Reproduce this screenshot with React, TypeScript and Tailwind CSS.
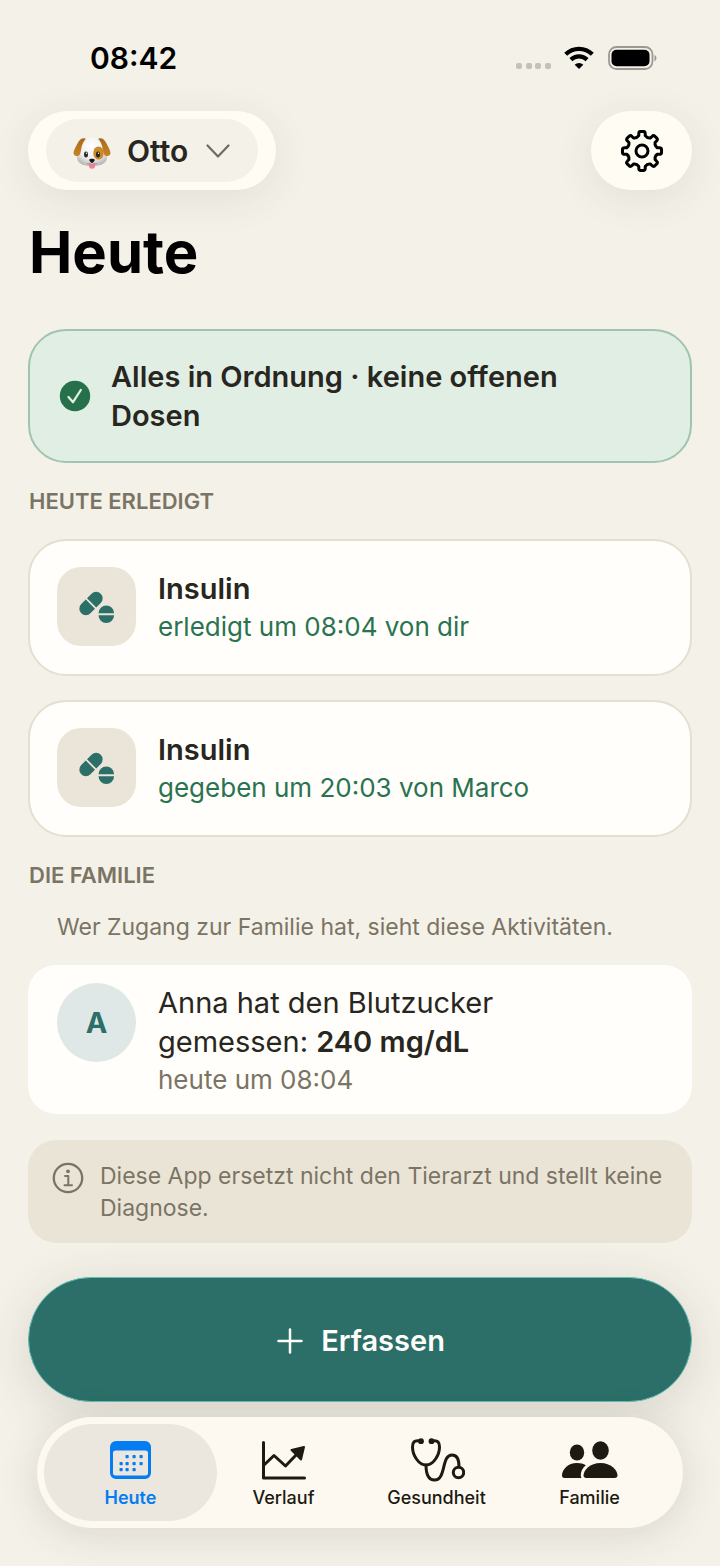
import type { ReactNode } from "react";

const gearPath = (() => {
  const point = (radius: number, degrees: number) => {
    const a = ((degrees - 90) * Math.PI) / 180;
    return `${(22 + radius * Math.cos(a)).toFixed(2)} ${(22 + radius * Math.sin(a)).toFixed(2)}`;
  };
  let d = "";
  for (let i = 0; i < 8; i++) {
    const c = i * 45;
    d += `${i === 0 ? "M" : "L"}${point(15.6, c - 12)}`;
    d += `L${point(17.6, c - 10.5)}Q${point(19.6, c - 9.5)} ${point(19.6, c - 5)}`;
    d += `L${point(19.6, c + 5)}Q${point(19.6, c + 9.5)} ${point(17.6, c + 10.5)}`;
    d += `L${point(15.6, c + 12)}Q${point(13.6, c + 22.5)} ${point(15.6, c + 33)}`;
  }
  return d + "Z";
})();

function GearIcon() {
  return (
    <svg viewBox="0 0 44 44" className="size-11" fill="none" stroke="#000" strokeWidth="3" strokeLinejoin="round" aria-hidden="true">
      <path d={gearPath} />
      <circle cx="22" cy="22" r="6" />
    </svg>
  );
}

function DogIcon() {
  return (
    <svg viewBox="0 0 38 32" className="mt-1 h-8 w-[38px]" aria-hidden="true">
      <defs>
        <radialGradient id="fur" cx="0.5" cy="0.3" r="0.7">
          <stop offset="0" stopColor="#ffffff" />
          <stop offset="0.65" stopColor="#f0efee" />
          <stop offset="1" stopColor="#b9b6b4" />
        </radialGradient>
        <linearGradient id="ear" x1="0" y1="0" x2="0" y2="1">
          <stop offset="0" stopColor="#a8681c" />
          <stop offset="1" stopColor="#c98523" />
        </linearGradient>
      </defs>
      <path d="M19 .5C26 .5 29.500 4 31 10c.800 3.500 3 6.500 3 10.500 0 6-6.500 8.500-15 8.500S4 26.500 4 20.500C4 16.500 6.200 13.500 7 10 8.500 4 12 .5 19 .5Z" fill="url(#fur)" />
      <path d="M13 1.800C9.500.300 6.800 2 4.800 6 3.200 9.500.500 13 .500 16c0 3.500 5 4.200 6.500 1.200C8.800 13 7.800 7 13 1.800Z" fill="url(#ear)" />
      <path d="M25 1.800c3.500-1.500 6.200.200 8.200 4.200 1.600 3.500 4.300 7 4.300 10 0 3.500-5 4.200-6.500 1.200C29.200 13 30.200 7 25 1.800Z" fill="url(#ear)" />
      <ellipse cx="25.500" cy="16" rx="5.200" ry="6.600" fill="#c98a2b" />
      <ellipse cx="13" cy="17.500" rx="2" ry="3" fill="#2d2b2b" />
      <ellipse cx="25" cy="17.500" rx="2" ry="3" fill="#2d2216" />
      <circle cx="13.500" cy="16.300" r=".7" fill="#fff" />
      <circle cx="25.500" cy="16.300" r=".7" fill="#fff" />
      <path d="M16 27h6v1.800a3 3 0 0 1-6 0Z" fill="#ef7f96" />
      <path d="M14 26.500c2.500.800 4.500-.200 5-1.500.500 1.300 2.500 2.300 5 1.500" fill="none" stroke="#8d8785" strokeWidth=".7" />
      <path d="M16.300 22.500c.700-1 4.700-1 5.400 0 .400.900-1.700 3.300-2.700 3.300s-3.100-2.400-2.700-3.300Z" fill="#161616" />
    </svg>
  );
}

function PillsIcon() {
  return (
    <svg viewBox="1 0 36 32" className="h-8 w-9" fill="#2c6e68" aria-hidden="true">
      <g transform="translate(13 12.500) rotate(-45)">
        <path d="M-.9-6.500v13h-6.400a6.500 6.500 0 0 1 0-13Z" />
        <path d="M.9-6.500v13h6.400a6.500 6.500 0 0 0 0-13Z" />
      </g>
      <path d="M20.500 22.200a7.800 7.800 0 0 1 15.600 0Z" />
      <path d="M20.500 24.200a7.800 7.800 0 0 0 15.600 0Z" />
    </svg>
  );
}

function CalendarIcon() {
  const dots = [[16, 15], [23, 15], [30, 15], [10, 22], [16, 22], [23, 22], [30, 22], [10, 28], [16, 28], [23, 28]];
  return (
    <svg viewBox="0 0 41 38" className="h-[38px] w-[41px]" fill="#047cf2" aria-hidden="true">
      <path fillRule="evenodd" d="M6 0h29a6 6 0 0 1 6 6v26a6 6 0 0 1-6 6H6a6 6 0 0 1-6-6V6a6 6 0 0 1 6-6ZM5.500 9.500a2.500 2.500 0 0 0-2.500 2.500v20a2.500 2.500 0 0 0 2.500 2.500h30a2.500 2.500 0 0 0 2.500-2.500V12a2.500 2.500 0 0 0-2.500-2.500Z" />
      {dots.map(([x, y]) => (
        <rect key={`${x}-${y}`} x={x - 0.5} y={y - 1} width="3.200" height="3.200" rx=".8" />
      ))}
    </svg>
  );
}

function ChartIcon() {
  return (
    <svg viewBox="0 0 46 40" className="h-10 w-[46px]" fill="none" stroke="#1c1a12" strokeWidth="3" strokeLinecap="round" strokeLinejoin="round" aria-hidden="true">
      <path d="M2.500 2.500v35.500h41" />
      <path d="m3 25 10-9.500L24.500 26 36 14" />
      <path d="m30.500 10 12.500-3-3 12.500Z" fill="#1c1a12" strokeWidth="2" />
    </svg>
  );
}

function StethoscopeIcon() {
  return (
    <svg viewBox="0 0 56 46" className="h-[46px] w-14" fill="none" stroke="#1c1a12" strokeWidth="3" strokeLinecap="round" aria-hidden="true">
      <path d="M11 4C5 2.800 3.500 5.500 3.500 10c0 8 6 18 13.500 18s13.500-10 13.500-18c0-4.500-1.500-7.200-7.500-6" />
      <path d="M17 28c0 10 2.500 15 8.500 15 12 0 6.500-25 17.500-25 5 0 7 4 7 11.500" />
      <circle cx="12" cy="4.200" r="2.900" fill="#1c1a12" stroke="none" />
      <circle cx="22.500" cy="4.200" r="2.900" fill="#1c1a12" stroke="none" />
      <circle cx="49.500" cy="35.500" r="5.200" />
    </svg>
  );
}

function FamilyIcon() {
  return (
    <svg viewBox="0 0 56 38" className="h-[38px] w-14" fill="#1c1a12" aria-hidden="true">
      <ellipse cx="15" cy="11.500" rx="7.200" ry="8" />
      <ellipse cx="38.500" cy="9.500" rx="8.300" ry="9.200" />
      <path d="M2.500 37C.8 37 0 36 0 34.500 0 28.500 6 22 15 22c3.600 0 6.500.900 8.800 2.300C20.500 27 18.500 31 18.800 35c.100.800.300 1.500.700 2Z" />
      <path d="M24.500 37c-2 0-3-1-3-2.500C21.500 29 28 22 38.500 22s17 7 17 12.500c0 1.500-1 2.500-3 2.500Z" />
    </svg>
  );
}

function StatusIcons() {
  return (
    <div className="flex items-center">
      <svg viewBox="0 0 36 24" className="mr-3 h-6 w-9" fill="#c4c1b9" aria-hidden="true">
        {[0, 10, 19, 29].map((x) => (
          <rect key={x} x={x} y="17" width="6" height="6" rx="2" />
        ))}
      </svg>
      <svg viewBox="0 0 30 24" className="mr-[14px] h-6 w-[30px]" fill="none" stroke="#000" strokeWidth="4.200" aria-hidden="true">
        <path d="M1.700 8.300a19 19 0 0 1 26.600 0" />
        <path d="M6.900 13.600a11.800 11.800 0 0 1 16.200 0" />
        <path d="M15 23l-4.300-4.300a6.400 6.400 0 0 1 8.600 0Z" fill="#000" stroke="none" />
      </svg>
      <svg viewBox="0 0 50 24" className="h-6 w-[50px]" aria-hidden="true">
        <rect x="1" y="1" width="43.500" height="22" rx="7.500" fill="none" stroke="#9b9992" strokeWidth="1.800" />
        <rect x="3.500" y="3.700" width="38" height="16.600" rx="5" />
        <path d="M46.500 9c2.600.800 2.600 5.400 0 6.200Z" fill="#9b9992" />
      </svg>
    </div>
  );
}

function SectionLabel({ children }: { children: ReactNode }) {
  return <h2 className="pl-px text-[22px] leading-7 font-semibold text-[#7b7464]">{children}</h2>;
}

function DoneCard({ title, detail }: { title: string; detail: string }) {
  return (
    <li className="flex items-center gap-[22px] rounded-[38px] border-2 border-[#e4dfcf] bg-[#fffefa] px-[27px] pt-[26px] pb-7">
      <div className="flex size-[79px] shrink-0 items-center justify-center rounded-[24px] bg-[#ebe5d9]">
        <PillsIcon />
      </div>
      <div className="min-w-0">
        <h3 className="text-[29px] leading-10 font-semibold">{title}</h3>
        <p className="text-[26px] leading-9 text-[#2a7350]">{detail}</p>
      </div>
    </li>
  );
}

function TabItem({ label, icon, active = false }: { label: string; icon: ReactNode; active?: boolean }) {
  return (
    <a
      href={`#${label.toLowerCase()}`}
      aria-current={active ? "page" : undefined}
      className={
        active
          ? "-mx-[10px] flex flex-col items-center rounded-full bg-[#ebe7de] pt-3 text-[18px] leading-7 font-semibold text-[#047cf2]"
          : "flex flex-col items-center pt-3 text-[18px] leading-7 font-medium text-[#1c1a12]"
      }
    >
      <span className="flex h-12 items-center">{icon}</span>
      {label}
    </a>
  );
}

export default function App() {
  return (
    <div className="flex min-h-screen flex-col bg-[#f4f1e9] font-['Inter','Liberation_Sans',sans-serif] text-[#282620]">
      <div className="flex items-center justify-between pt-[38px] pr-[62px] pl-[90px]">
        <time className="text-[30px] leading-10 font-semibold text-black">08:42</time>
        <StatusIcons />
      </div>

      <header className="px-7">
        <div className="mt-[33px] flex items-center justify-between">
          <div className="rounded-full bg-[#fffdf3] px-[18px] py-2 shadow-[0_8px_40px_rgba(60,50,30,0.09)]">
            <button type="button" className="flex h-[63px] items-center rounded-full bg-[#f4f1e9] pr-7 pl-[27px]">
              <DogIcon />
              <span className="ml-4 text-[30px] leading-10 font-semibold">Otto</span>
              <svg viewBox="0 0 24 14" className="mt-px ml-[18px] h-[14px] w-6" fill="none" stroke="#6f6b60" strokeWidth="2.200" strokeLinecap="round" strokeLinejoin="round" aria-hidden="true">
                <path d="m1.500 1.500 10.500 11 10.500-11" />
              </svg>
            </button>
          </div>
          <button
            type="button"
            aria-label="Einstellungen"
            className="flex h-[79px] w-[101px] items-center justify-center rounded-full bg-[#fffdf3] shadow-[0_8px_40px_rgba(60,50,30,0.09)]"
          >
            <GearIcon />
          </button>
        </div>
        <h1 className="mt-[26px] pl-px text-[58px] leading-[72px] font-bold text-black">Heute</h1>
      </header>

      <main className="flex flex-col px-7 pt-[41px]">
        <section className="flex items-center gap-5 rounded-[38px] border-2 border-[#9fc4af] bg-[#e1eee4] px-[29px] py-[26px]">
          <svg viewBox="0 0 32 32" className="size-8 shrink-0" aria-hidden="true">
            <circle cx="16" cy="16" r="15.200" fill="#27704c" />
            <path d="m9.500 17 4.500 5.200 7.800-12.200" fill="none" stroke="#e1eee4" strokeWidth="2.300" strokeLinecap="round" strokeLinejoin="round" />
          </svg>
          <p className="max-w-[500px] text-[29px] leading-[39px] font-semibold">Alles in Ordnung · keine offenen Dosen</p>
        </section>

        <section className="mt-6">
          <SectionLabel>HEUTE ERLEDIGT</SectionLabel>
          <ul className="mt-6 flex flex-col gap-6">
            <DoneCard title="Insulin" detail="erledigt um 08:04 von dir" />
            <DoneCard title="Insulin" detail="gegeben um 20:03 von Marco" />
          </ul>
        </section>

        <section className="mt-6">
          <SectionLabel>DIE FAMILIE</SectionLabel>
          <p className="mt-[22px] px-[29px] text-[23px] leading-8 text-[#7b7464]">Wer Zugang zur Familie hat, sieht diese Aktivitäten.</p>
          <article className="mt-[22px] flex gap-[22px] rounded-[28px] bg-[#fffefa] px-[29px] pt-[18px] pb-[15px]">
            <div className="flex size-[79px] shrink-0 items-center justify-center rounded-full bg-[#e0e8e7] text-[29px] font-bold text-[#2c6e68]">A</div>
            <div className="max-w-[400px]">
              <p className="text-[29px] leading-[39px]">
                Anna hat den Blutzucker gemessen: <strong className="font-semibold">240 mg/dL</strong>
              </p>
              <p className="text-[26px] leading-[38px] text-[#7b7464]">heute um 08:04</p>
            </div>
          </article>
        </section>

        <aside className="mt-[26px] flex items-start gap-4 rounded-[28px] bg-[#eae4d7] px-6 pt-5 pb-[19px]">
          <svg viewBox="0 0 32 32" className="mt-[2px] size-8 shrink-0" fill="none" stroke="#7b7464" strokeWidth="2.300" strokeLinecap="round" strokeLinejoin="round" aria-hidden="true">
            <circle cx="16" cy="16" r="14.200" />
            <path d="M13 14h3.300v9M12.500 23.300h7.500" strokeWidth="2" />
            <circle cx="16" cy="9.300" r="1.900" fill="#7b7464" stroke="none" />
          </svg>
          <p className="text-[23px] leading-8 text-[#7b7464]">Diese App ersetzt nicht den Tierarzt und stellt keine Diagnose.</p>
        </aside>
      </main>

      <footer className="px-7 pt-[34px] pb-[38px]">
        <button
          type="button"
          className="flex h-[125px] w-full items-center justify-center gap-[18px] rounded-full border border-[#5fbdb3] bg-[#2c6e68] pt-[2px] pl-[2px] text-[29px] font-semibold text-[#fffefa] shadow-[0_10px_50px_rgba(60,55,40,0.15)]"
        >
          <svg viewBox="0 0 26 26" className="size-[26px]" fill="none" stroke="#fffefa" strokeWidth="2.500" strokeLinecap="round" aria-hidden="true">
            <path d="M13 1.500v23M1.500 13h23" />
          </svg>
          Erfassen
        </button>
        <nav className="mx-[9px] mt-[15px] grid h-[111px] grid-cols-4 rounded-full bg-[#fef9f0] px-[17px] py-[7px] shadow-[0_6px_40px_rgba(60,55,40,0.14)]">
          <TabItem label="Heute" icon={<CalendarIcon />} active />
          <TabItem label="Verlauf" icon={<ChartIcon />} />
          <TabItem label="Gesundheit" icon={<StethoscopeIcon />} />
          <TabItem label="Familie" icon={<FamilyIcon />} />
        </nav>
      </footer>
    </div>
  );
}
